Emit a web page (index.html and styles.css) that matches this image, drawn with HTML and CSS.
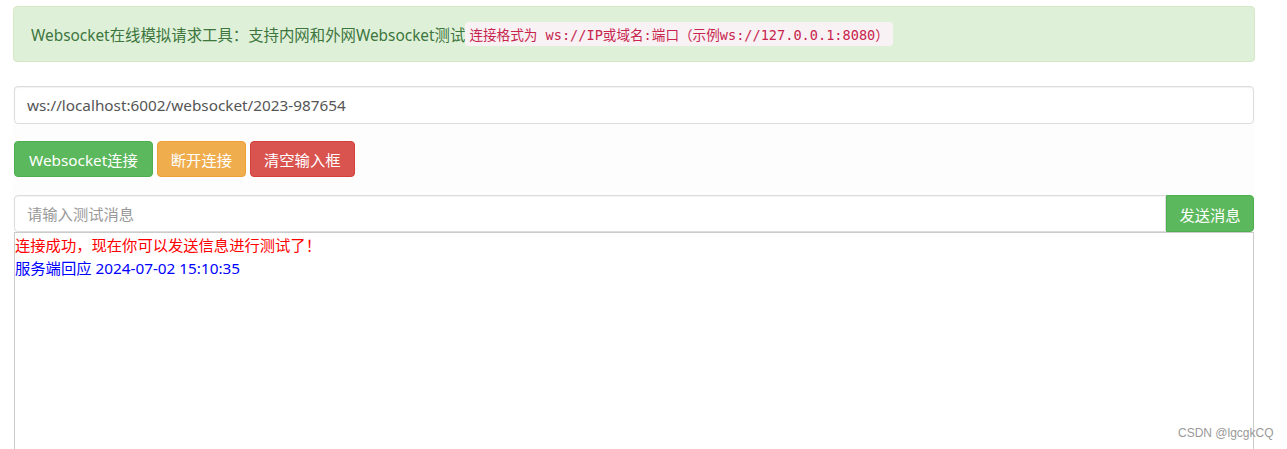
FILE: index.html
```html
<!DOCTYPE html>
<html>
<head>
    <title>Websocket在线模拟请求工具</title>
    <link rel="stylesheet" href="styles.css">
</head>
<body>
    <div class="container">
        <div class="alert">
            Websocket在线模拟请求工具：支持内网和外网Websocket测试<code>连接格式为 ws://IP或域名:端口（示例ws://127.0.0.1:8080）</code>
        </div>
        <div class="panel">
            <input type="text" class="form-control" id="url" value="ws://localhost:6002/websocket/2023-987654" />
            <div class="btn-row">
                <button class="btn btn-success">Websocket连接</button>
                <button class="btn btn-warning">断开连接</button>
                <button class="btn btn-danger">清空输入框</button>
            </div>
            <div class="input-group">
                <input type="text" class="form-control" placeholder="请输入测试消息" />
                <button class="btn btn-success btn-send">发送消息</button>
            </div>
            <div class="messages">
                <div class="msg-ok">连接成功，现在你可以发送信息进行测试了！</div>
                <div class="msg-server">服务端回应 2024-07-02 15:10:35</div>
            </div>
        </div>
    </div>
    <div class="watermark">CSDN @lgcgkCQ</div>
</body>
</html>
```

FILE: styles.css
```css
body {
    margin: 0;
    font-family: "Noto Sans", "Noto Sans CJK SC", sans-serif;
    font-size: 15.3px;
    color: #555;
    background-color: #fff;
    overflow: hidden;
}

.container {
    width: 1242px;
    margin: 6px 0 0 13px;
}

.alert {
    height: 56px;
    box-sizing: border-box;
    padding: 0 17px;
    display: flex;
    align-items: center;
    background-color: #dff0d8;
    border: 1px solid #d6e9c6;
    border-radius: 4px;
    color: #3c763d;
    font-size: 15.4px;
}

code {
    font-family: "DejaVu Sans Mono", "Noto Sans CJK SC", monospace;
    font-size: 13.6px;
    color: #c7254e;
    background-color: #f9f2f4;
    border-radius: 4px;
    padding: 2px 4px;
}

.panel {
    margin-top: 24px;
    padding: 0 1px;
    background-color: #fdfdfd;
}

.form-control {
    display: block;
    width: 100%;
    height: 38px;
    box-sizing: border-box;
    padding: 6px 12px;
    font-family: inherit;
    font-size: 15.3px;
    color: #555;
    background-color: #fff;
    border: 1px solid #dcdcdc;
    border-radius: 4px;
    box-shadow: inset 0 1px 1px rgba(0, 0, 0, 0.05);
}

.form-control::placeholder {
    color: #999;
}

.btn-row {
    display: flex;
    gap: 4px;
    margin-top: 17px;
}

.btn {
    height: 36px;
    padding: 0 14px;
    font-family: inherit;
    font-size: 15.3px;
    color: #fff;
    border: 1px solid transparent;
    border-radius: 4px;
    cursor: pointer;
}

.btn-success {
    background-color: #5cb85c;
    border-color: #4cae4c;
}

.btn-warning {
    background-color: #f0ad4e;
    border-color: #eea236;
    padding: 0 13px;
}

.btn-danger {
    background-color: #d9534f;
    border-color: #d43f3a;
    padding: 0 13px;
}

.input-group {
    display: flex;
    margin-top: 18px;
}

.input-group .form-control {
    flex: 1;
    height: 37px;
    border-radius: 4px 0 0 4px;
}

.btn-send {
    height: 37px;
    width: 88px;
    padding: 0;
    border-radius: 0 4px 4px 0;
}

.messages {
    height: 240px;
    border: 1px solid #ccc;
    border-bottom: none;
    background-color: #fff;
    font-size: 15.3px;
    line-height: 23px;
    padding-top: 1px;
}

.msg-ok {
    color: #f00;
}

.msg-server {
    color: #00f;
}

.watermark {
    position: absolute;
    left: 1178px;
    top: 426px;
    font-family: "Liberation Sans", sans-serif;
    font-size: 12px;
    color: #999;
}
```
